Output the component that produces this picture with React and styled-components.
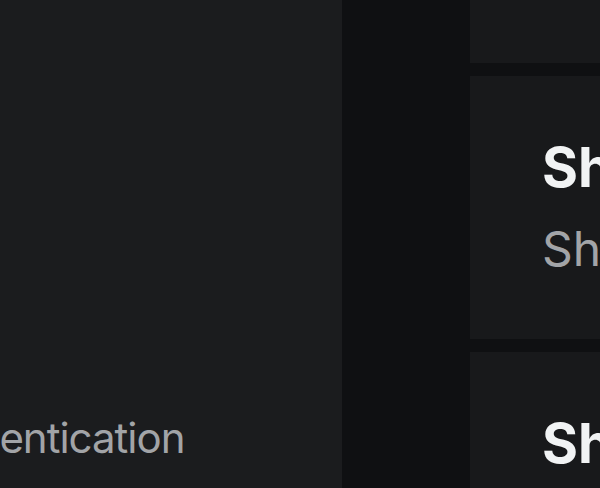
import styled, { createGlobalStyle } from 'styled-components';

const GlobalStyle = createGlobalStyle`
  html, body {
    margin: 0;
    padding: 0;
    background: #0f1012;
    overflow: hidden;
  }
  body {
    font-family: Inter, "Noto Sans", sans-serif;
  }
`;

const Layout = styled.div`
  display: flex;
  gap: 128px;
  height: 488px;
  overflow: hidden;
`;

const Sidebar = styled.nav`
  flex: 0 0 342px;
  background: #1b1c1e;
  display: flex;
  flex-direction: column;
  justify-content: flex-end;
  padding-bottom: 22px;
  overflow: hidden;
`;

const NavItem = styled.div`
  font-size: 42px;
  line-height: 56px;
  letter-spacing: -1px;
  color: #a2a4a7;
  white-space: nowrap;
  margin-left: -89px;
`;

const Content = styled.main`
  flex: 1;
  display: flex;
  flex-direction: column;
  gap: 13px;
  margin-top: -200px;
  min-width: 0;
`;

const Card = styled.section`
  background: #18191b;
  height: ${p => p.h}px;
  flex: 0 0 auto;
  padding: 58px 0 0 72px;
  box-sizing: border-box;
  overflow: hidden;
  white-space: nowrap;
`;

const Title = styled.h2`
  margin: 0;
  font-size: 55px;
  line-height: 66px;
  font-weight: 700;
  color: #f1f3f4;
`;

const Desc = styled.p`
  margin: 19px 0 0;
  font-size: 48px;
  line-height: 60px;
  color: #a2a4a7;
`;

const cards = [
  { title: 'Show previews', desc: 'Show message text in notifications', h: 263 },
  { title: 'Show previews', desc: 'Show message text in notifications', h: 263 },
  { title: 'Show badges', desc: 'Show unread count on app icon', h: 263 },
];

export default function App() {
  return (
    <>
      <GlobalStyle />
      <Layout>
        <Sidebar>
          <NavItem>Authentication</NavItem>
        </Sidebar>
        <Content>
          {cards.map((c, i) => (
            <Card key={i} h={c.h}>
              <Title>{c.title}</Title>
              <Desc>{c.desc}</Desc>
            </Card>
          ))}
        </Content>
      </Layout>
    </>
  );
}
